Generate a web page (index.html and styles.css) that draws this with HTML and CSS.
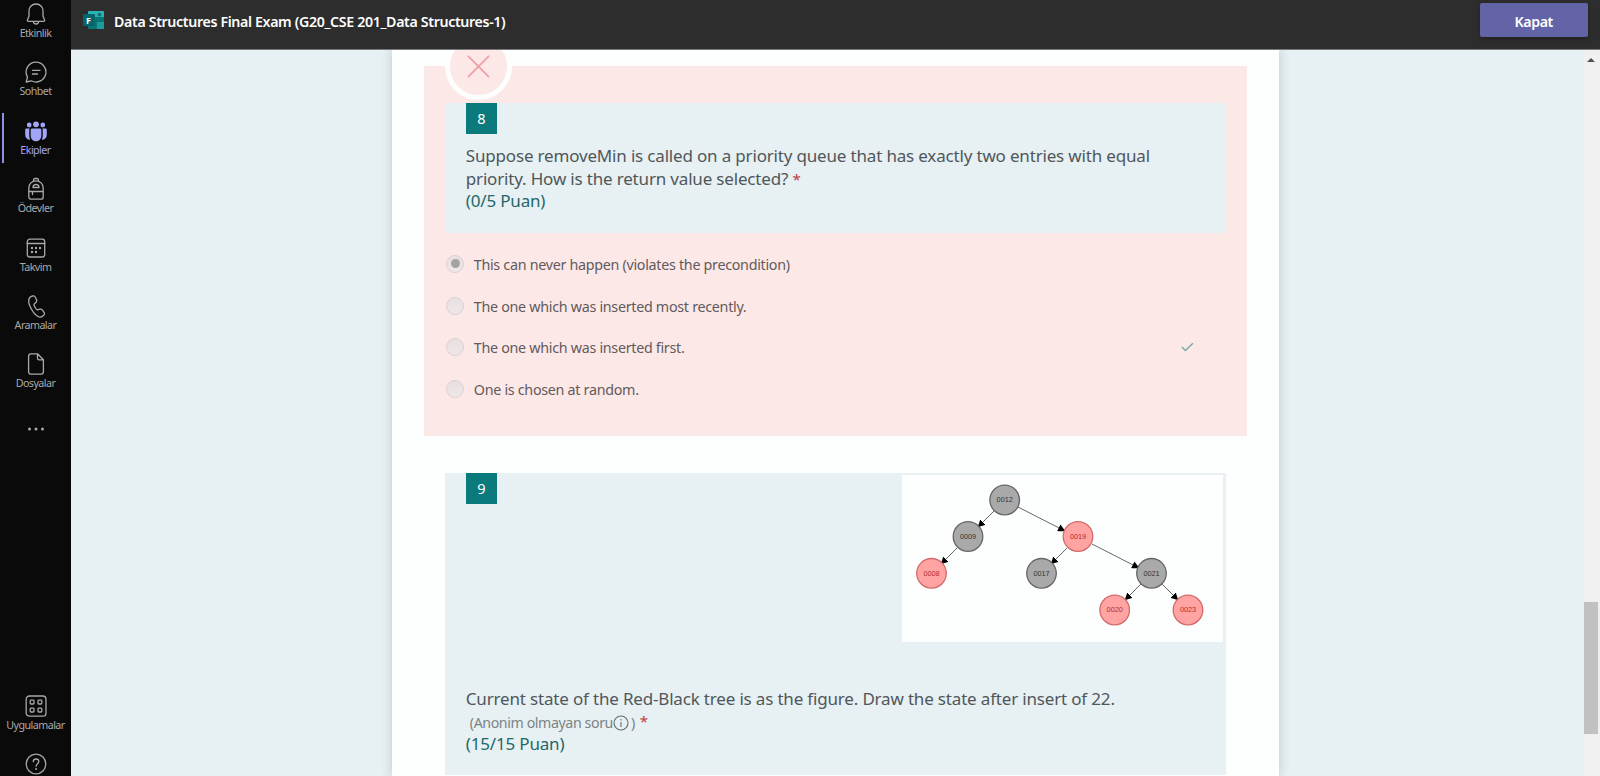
FILE: index.html
```html
<!DOCTYPE html>
<html lang="tr">
<head>
<meta charset="utf-8">
<title>Data Structures Final Exam</title>
<link rel="stylesheet" href="styles.css">
</head>
<body>
<div class="app">
  <nav class="rail">
    <div class="rail-group">
      <a class="rail-item"><svg class="icon" viewBox="0 0 24 24"><path d="M12 2C7.900 2 5 5 5 9v5l-1.600 4c-.3.700.2 1.300 1 1.300h15.200c.8 0 1.300-.600 1-1.300L19 14V9c0-4-2.900-7-7-7z M9.300 19.600c.3 1.500 1.300 2.400 2.700 2.400s2.400-.900 2.700-2.400"/></svg><span class="rail-label">Etkinlik</span></a>
      <a class="rail-item"><svg class="icon" viewBox="0 0 24 24"><path d="M12 2.200a9.900 9.900 0 1 1-4.700 18.600L2.200 22l1.300-4.900A9.900 9.900 0 0 1 12 2.200zM8.500 10.300h7.500M8.500 14h5"/></svg><span class="rail-label">Sohbet</span></a>
      <a class="rail-item active"><svg class="icon solid" viewBox="0 0 24 24"><circle cx="12" cy="5.300" r="2.900"/><circle cx="5.200" cy="6" r="2.400"/><circle cx="18.800" cy="6" r="2.400"/><path d="M8.200 9.500h7.600c.9 0 1.500.600 1.500 1.500v6a5.300 5.300 0 0 1-10.600 0v-6c0-.9.600-1.500 1.500-1.500zM2.400 9.500h3.300c-.3.400-.4.900-.4 1.500v6c0 1.300.4 2.600 1 3.600A4.600 4.600 0 0 1 1.200 16v-5.300c0-.7.500-1.200 1.200-1.200zM21.600 9.500h-3.300c.3.400.4.900.4 1.500v6c0 1.300-.4 2.600-1 3.600a4.600 4.600 0 0 0 5.100-4.600v-5.300c0-.7-.5-1.200-1.200-1.200z"/></svg><span class="rail-label">Ekipler</span></a>
      <a class="rail-item"><svg class="icon" viewBox="0 0 24 24"><path d="M9.500 4.200V3a1.500 1.500 0 0 1 1.500-1.500h2A1.500 1.500 0 0 1 14.500 3v1.200M4.800 11a7.200 7.200 0 0 1 14.400 0v9a2.200 2.200 0 0 1-2.200 2.200H7A2.200 2.200 0 0 1 4.800 20zM5 14.500h14M8.500 14.500v3M9 10.500a3 3 0 0 1 6 0z"/></svg><span class="rail-label">Ödevler</span></a>
      <a class="rail-item"><svg class="icon" viewBox="0 0 24 24"><rect x="3.300" y="3.200" width="17.400" height="17.800" rx="2.500"/><path d="M3.300 7.500h17.400"/><g class="dots"><circle cx="12" cy="12" r="1.200"/><circle cx="16" cy="12" r="1.200"/><circle cx="8" cy="12" r="1.200"/><circle cx="8" cy="16" r="1.200"/><circle cx="12" cy="16" r="1.200"/></g></svg><span class="rail-label">Takvim</span></a>
      <a class="rail-item"><svg class="icon" viewBox="0 0 24 24"><path d="M7.400 2.300l1.200-.3c1.200-.3 2.400.3 2.900 1.400l1 2.300c.4 1 .2 2.100-.6 2.800L10 10.200c-.1.800.4 2 1.200 3.300.8 1.400 1.500 2.100 2.200 2.400l2.400-.7c1-.3 2.100 0 2.700.9l1.400 2c.7 1 .6 2.300-.2 3.200l-.9.800c-1 .9-2.400 1.200-3.700.8-2.700-.9-5-3.100-7-6.600C6 12.800 4.400 9.600 4.700 6.700c.1-2 1-3.900 2.700-4.400z"/></svg><span class="rail-label">Aramalar</span></a>
      <a class="rail-item"><svg class="icon" viewBox="0 0 24 24"><path d="M13.500 1.800H7A2.400 2.400 0 0 0 4.600 4.200v15.600A2.400 2.400 0 0 0 7 22.200h10a2.400 2.400 0 0 0 2.400-2.400V7.800zM13.500 1.800v4.400c0 1 .7 1.600 1.600 1.600h4.300"/></svg><span class="rail-label">Dosyalar</span></a>
      <a class="rail-item more"><svg class="icon" viewBox="0 0 24 24"><g class="dots"><circle cx="5.500" cy="12" r="1.500"/><circle cx="12" cy="12" r="1.500"/><circle cx="18.500" cy="12" r="1.500"/></g></svg></a>
    </div>
    <div class="rail-group bottom">
      <a class="rail-item"><svg class="icon" viewBox="0 0 24 24"><rect x="2.200" y="2" width="19.800" height="20.200" rx="3.200"/><rect x="6.200" y="6.200" width="3.800" height="3.800" rx=".8"/><rect x="14" y="6.200" width="3.800" height="3.800" rx=".8"/><rect x="6.200" y="14.200" width="3.800" height="3.800" rx=".8"/><rect x="14" y="14.200" width="3.800" height="3.800" rx=".8"/></svg><span class="rail-label">Uygulamalar</span></a>
      <a class="rail-item help"><svg class="icon" viewBox="0 0 24 24"><circle cx="12" cy="12" r="9.800"/><path d="M9.300 9.700c0-1.600 1.200-2.700 2.800-2.700s2.700 1.100 2.700 2.600c0 2-2.700 2.300-2.700 4.600"/><g class="dots"><circle cx="12.100" cy="17" r="1"/></g></svg></a>
    </div>
  </nav>
  <div class="stage">
    <header class="topbar">
      <svg class="forms-logo" viewBox="0 0 22 20"><rect x="5" y="1" width="16" height="18" rx="1" fill="#0b7478"/><path d="M6 1h14a1 1 0 0 1 1 1v5H5V2a1 1 0 0 1 1-1z" fill="#2bb3b1"/><circle cx="16.500" cy="4.600" r="1.900" fill="#0c7174"/><rect x="14" y="12" width="7" height="7" fill="#1a9c9c"/><rect y="4" width="12" height="12" rx="1" fill="#06656a"/><text x="3" y="13.500" class="logo-letter">F</text></svg>
      <h1 class="title">Data Structures Final Exam (G20_CSE 201_Data Structures-1)</h1>
      <button class="close">Kapat</button>
    </header>
    <div class="viewport">
      <main class="form">
        <section class="question wrong">
          <div class="verdict"><svg viewBox="0 0 24 24"><path d="M1 1l22 22M23 1L1 23"/></svg></div>
          <div class="question-head">
            <span class="number">8</span>
            <p class="prompt">Suppose removeMin is called on a priority queue that has exactly two entries with equal<br>priority. How is the return value selected? <span class="required">*</span></p>
            <p class="points">(0/5 Puan)</p>
          </div>
          <ul class="choices">
            <li class="choice"><span class="radio checked"></span><span class="answer">This can never happen (violates the precondition)</span></li>
            <li class="choice"><span class="radio"></span><span class="answer">The one which was inserted most recently.</span></li>
            <li class="choice"><span class="radio"></span><span class="answer">The one which was inserted first.</span><svg class="tick" viewBox="0 0 14 10"><path d="M1 5l3.800 3.800L12.800 1"/></svg></li>
            <li class="choice"><span class="radio"></span><span class="answer">One is chosen at random.</span></li>
          </ul>
        </section>
        <section class="question-head second">
          <div class="figure-row">
            <span class="number">9</span>
            <svg class="tree" viewBox="902 475 321 167">
              <defs><marker id="arrow" viewBox="0 0 8 8" refX="7.500" refY="4" markerWidth="7.500" markerHeight="7.500" markerUnits="userSpaceOnUse" orient="auto"><path d="M0 0l8 4-8 4z"/></marker></defs>
              <g class="edges"><path d="M994 511L978 527"/><path d="M1018 507L1065 531"/><path d="M957 548L941 564"/><path d="M1067 548L1051 564"/><path d="M1092 544L1139 568"/><path d="M1141 584L1125 600"/><path d="M1162 584L1178 600"/></g>
              <g class="black"><circle cx="1004.700" cy="500" r="14.800"/><circle cx="968" cy="536.500" r="14.800"/><circle cx="1041.500" cy="573.300" r="14.800"/><circle cx="1151.500" cy="573.300" r="14.800"/><text x="1004.700" y="502.300">0012</text><text x="968" y="538.800">0009</text><text x="1041.500" y="575.600">0017</text><text x="1151.500" y="575.600">0021</text></g>
              <g class="red"><circle cx="1078" cy="536.500" r="14.800"/><circle cx="931.500" cy="573.300" r="14.800"/><circle cx="1114.700" cy="610" r="14.800"/><circle cx="1188" cy="610" r="14.800"/><text x="1078" y="538.800">0019</text><text x="931.500" y="575.600">0008</text><text x="1114.700" y="612.300">0020</text><text x="1188" y="612.300">0023</text></g>
            </svg>
          </div>
          <p class="prompt">Current state of the Red-Black tree is as the figure. Draw the state after insert of 22.</p>
          <p class="note"><span>(Anonim olmayan soru</span><svg class="info" viewBox="0 0 16 16"><circle cx="8" cy="8" r="7"/><path d="M8 7v5M8 4v1.500"/></svg><span>)</span><span class="required">*</span></p>
          <p class="points">(15/15 Puan)</p>
        </section>
      </main>
      <div class="scrollbar"><span class="arrow-up"></span><span class="thumb"></span></div>
    </div>
  </div>
</div>
</body>
</html>
```
FILE: styles.css
```css
* { box-sizing: border-box; }
body { margin: 0; overflow: hidden; font-family: "Noto Sans", "Open Sans", sans-serif; color: #50575a; }
p, h1, ul { margin: 0; padding: 0; font-weight: 400; }
.app { display: flex; width: 100vw; height: 776px; overflow: hidden; background: #e7f0f3; }

.rail { width: 71px; flex: none; background: #0a0a0a; color: #a9a9a9; display: flex; flex-direction: column; justify-content: space-between; overflow: hidden; }
.rail-group { margin-top: -8.2px; }
.rail-group.bottom { margin: 0 0 -24.600px; }
.rail-item { height: 58.4px; display: flex; flex-direction: column; align-items: center; justify-content: center; border-left: 2px solid transparent; margin-left: 2px; padding-right: 4px; }
.rail-item.active { color: #a2a4f5; border-image: linear-gradient(transparent 4px, #8e90e6 4px, #8e90e6 54px, transparent 54px) 0 0 0 2; }
.rail-item.more { padding-bottom: 2px; }
.rail-item.help { justify-content: flex-start; padding-top: 10px; }
.icon { width: 24px; height: 24px; flex: none; fill: none; stroke: currentColor; stroke-width: 1.3; stroke-linejoin: round; stroke-linecap: round; }
.icon.solid, .dots { fill: currentColor; stroke: none; }
.rail-label { font-size: 10.700px; line-height: 13px; white-space: nowrap; letter-spacing: -0.55px; margin-top: 1px; }

.stage { flex: 1; min-width: 0; display: flex; flex-direction: column; }
.topbar { height: 50px; flex: none; background: #2d2d2d; border-bottom: 1px solid #77797a; display: flex; align-items: flex-start; padding: 3px 12.500px 0 12px; }
.forms-logo { width: 22px; height: 20px; margin-top: 7px; }
.logo-letter { font: 700 9px "Noto Sans", sans-serif; fill: #fff; }
.title { color: #fff; font-size: 14.200px; font-weight: 600; line-height: 20px; letter-spacing: -0.35px; margin: 9px 0 0 9px; white-space: nowrap; flex: 1; }
.close { width: 107.500px; height: 34px; border: 0; border-radius: 2px; background: #6264a7; color: #fff; font: 600 14.200px "Noto Sans", sans-serif; letter-spacing: -0.4px; padding-top: 3px; box-shadow: 0 2px 4px rgba(0,0,0,.25); }

.viewport { flex: 1; min-height: 0; display: flex; overflow: hidden; padding-left: 321.300px; }
.form { width: 886.500px; flex: none; background: #fdfefe; box-shadow: 0 0 10px rgba(60,90,100,.25); padding: 16px 31.700px 0; }
.question.wrong { background: #fde8e8; height: 370px; width: 823px; padding: 36.500px 21.300px 0 20.800px; position: relative; }
.verdict { position: absolute; left: 21.200px; top: -33.500px; width: 67px; height: 67px; border: 5px solid #fdfefe; border-radius: 50%; background: #fde8e8; display: flex; align-items: center; justify-content: center; }
.verdict svg { width: 23px; height: 23px; margin-top: 1px; fill: none; stroke: #efa0a6; stroke-width: 1.9; }
.question-head { background: #e7f0f3; height: 130.500px; padding: 0 21px; }
.number { display: flex; align-items: center; justify-content: center; width: 31px; height: 31px; background: #0b7a7c; color: #fff; font-size: 14.500px; flex: none; }
.prompt, .points { font-size: 17px; line-height: 22.500px; letter-spacing: -0.175px; white-space: nowrap; width: max-content; }
.question-head .number + .prompt { margin-top: 11.500px; }
.points { color: #23686a; }
.required { color: #c13b40; font-size: 15px; }
.choices { list-style: none; padding-top: 10px; }
.choice { height: 41.700px; display: flex; align-items: center; font-size: 14.300px; letter-spacing: -0.29px; white-space: nowrap; color: #625a5b; }
.answer { padding-top: 1.500px; }
.radio { width: 18px; height: 18px; margin: 0 9.700px 0 1.300px; border: 1px solid #d9d2d3; border-radius: 50%; background: linear-gradient(#e8dfe0, #efe7e8); display: flex; align-items: center; justify-content: center; }
.radio.checked::after { content: ""; width: 9px; height: 9px; border-radius: 50%; background: #a5a2a2; }
.tick { width: 13px; height: 10px; margin: 0 32px 0 auto; fill: none; stroke: #70a8a5; stroke-width: 1.4; }

.second { margin: 36.500px 0 0 20.800px; width: 781px; height: 302.500px; padding: 0 2.500px 0 21px; }
.figure-row { display: flex; justify-content: space-between; }
.tree { width: 321px; height: 167px; margin-top: 2px; background: #fdfefe; }
.edges { stroke: #666; stroke-width: 1; fill: none; }
.edges path { marker-end: url(#arrow); }
.tree text { font: 7.300px "Liberation Sans", sans-serif; text-anchor: middle; }
.black circle { fill: #a9a9a9; stroke: #666; stroke-width: 1.3; }
.black text { fill: #333; }
.red circle { fill: #ffa3a3; stroke: #d26a6a; stroke-width: 1.3; }
.red text { fill: #b52c2c; }
.second .prompt { margin-top: 46px; }
.note { display: flex; align-items: center; height: 22.500px; font-size: 14.200px; letter-spacing: -0.4px; padding: 2px 0 0 4px; color: #7c8386; white-space: nowrap; }
.info { width: 16px; height: 16px; margin: 1px 2px 0 0; fill: none; stroke: #666d70; stroke-width: 1.1; }
.note .required { margin: -3px 0 0 5px; }

.scrollbar { width: 17px; margin-left: auto; background: #f0f0f0; display: flex; flex-direction: column; }
.arrow-up { margin: 8px 0 0 4px; width: 8px; height: 4px; border: 4px solid transparent; border-top: 0; border-bottom: 4px solid #505050; }
.thumb { width: 14px; height: 132px; margin: 540px 0 0 1px; background: #c1c1c1; }
```
